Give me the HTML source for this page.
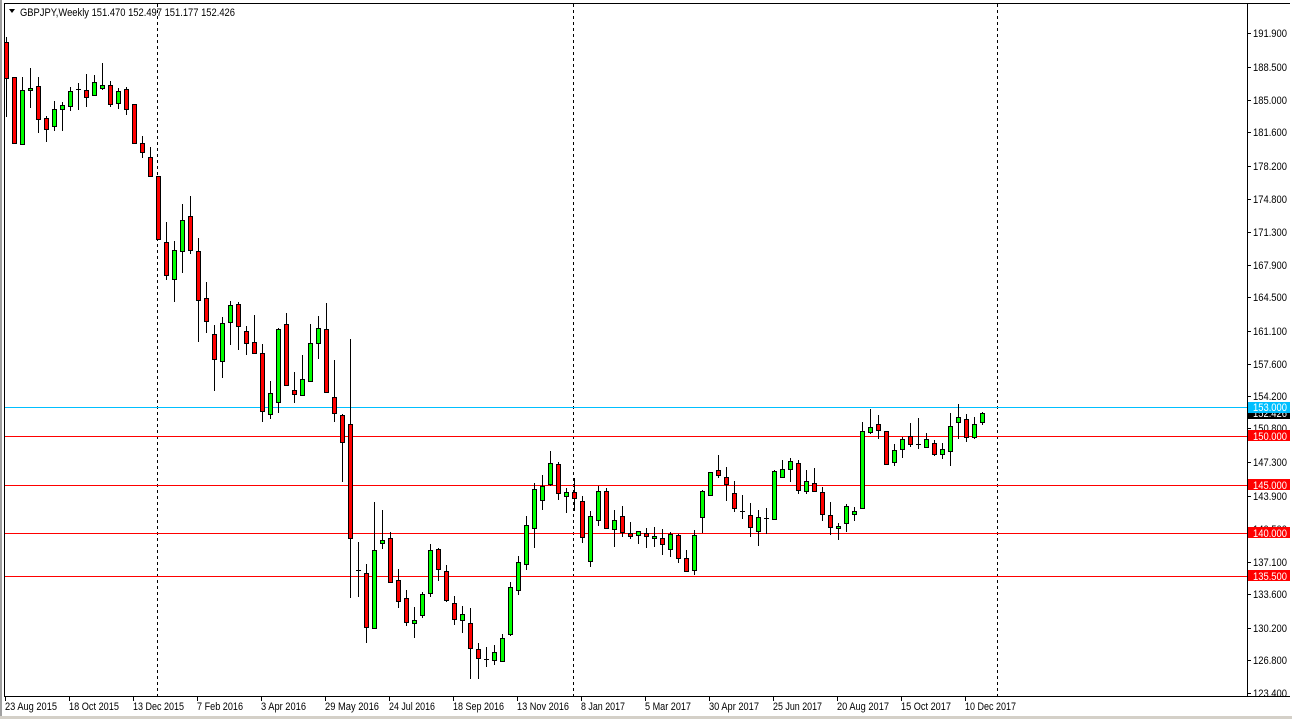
<!DOCTYPE html>
<html><head><meta charset="utf-8"><style>
html,body{margin:0;padding:0;background:#fff;width:1292px;height:719px;overflow:hidden}
svg{display:block}
text{font-family:"Liberation Sans",sans-serif;font-size:11px}
.r{fill:#ff0000;stroke:#000;stroke-width:1}
.g{fill:#00ff00;stroke:#000;stroke-width:1}
</style></head><body>
<svg width="1292" height="719" viewBox="0 0 1292 719" xmlns="http://www.w3.org/2000/svg">
<rect x="0" y="0" width="1292" height="719" fill="#fff"/>
<rect x="0" y="0" width="2" height="719" fill="#a0a0a0"/>
<rect x="0" y="716" width="1292" height="3" fill="#d4d0c8"/>
<rect x="4" y="3" width="1286" height="1" fill="#000"/>
<rect x="4" y="3" width="1" height="694" fill="#000"/>
<rect x="4" y="696" width="1286" height="1" fill="#000"/>
<rect x="1247" y="3" width="1" height="694" fill="#000"/>
<g stroke="#000" stroke-width="1" stroke-dasharray="3,3">
<line x1="157.5" y1="4" x2="157.5" y2="696"/>
<line x1="573.5" y1="4" x2="573.5" y2="696"/>
<line x1="997.5" y1="4" x2="997.5" y2="696"/>
</g>
<g>
<rect x="5" y="407" width="1242" height="1" fill="#00bfff"/>
<rect x="5" y="436" width="1242" height="1" fill="#ff0000"/>
<rect x="5" y="485" width="1242" height="1" fill="#ff0000"/>
<rect x="5" y="533" width="1242" height="1" fill="#ff0000"/>
<rect x="5" y="576" width="1242" height="1" fill="#ff0000"/>
</g>
<g fill="#000">
<rect x="6" y="37" width="1" height="80"/><rect x="14" y="77" width="1" height="67"/><rect x="22" y="77" width="1" height="67"/><rect x="30" y="68" width="1" height="40"/><rect x="38" y="77" width="1" height="56"/><rect x="46" y="116" width="1" height="26"/><rect x="54" y="101" width="1" height="30"/><rect x="62" y="102" width="1" height="29"/><rect x="70" y="87" width="1" height="24"/><rect x="78" y="83" width="1" height="27"/><rect x="86" y="74" width="1" height="33"/><rect x="94" y="75" width="1" height="21"/><rect x="102" y="63" width="1" height="27"/><rect x="110" y="81" width="1" height="26"/><rect x="118" y="88" width="1" height="21"/><rect x="126" y="87" width="1" height="28"/><rect x="134" y="104" width="1" height="39"/><rect x="142" y="136" width="1" height="22"/><rect x="150" y="147" width="1" height="29"/><rect x="158" y="176" width="1" height="64"/><rect x="166" y="222" width="1" height="58"/><rect x="174" y="241" width="1" height="61"/><rect x="182" y="204" width="1" height="69"/><rect x="190" y="196" width="1" height="58"/><rect x="198" y="238" width="1" height="104"/><rect x="206" y="282" width="1" height="51"/><rect x="214" y="325" width="1" height="66"/><rect x="222" y="317" width="1" height="61"/><rect x="230" y="301" width="1" height="44"/><rect x="238" y="302" width="1" height="48"/><rect x="246" y="326" width="1" height="29"/><rect x="254" y="315" width="1" height="38"/><rect x="262" y="344" width="1" height="78"/><rect x="270" y="381" width="1" height="38"/><rect x="278" y="328" width="1" height="85"/><rect x="286" y="313" width="1" height="73"/><rect x="294" y="372" width="1" height="31"/><rect x="302" y="355" width="1" height="40"/><rect x="310" y="324" width="1" height="58"/><rect x="318" y="316" width="1" height="43"/><rect x="326" y="303" width="1" height="89"/><rect x="334" y="360" width="1" height="62"/><rect x="342" y="414" width="1" height="68"/><rect x="350" y="339" width="1" height="259"/><rect x="358" y="542" width="1" height="55"/><rect x="366" y="564" width="1" height="79"/><rect x="374" y="502" width="1" height="126"/><rect x="382" y="510" width="1" height="39"/><rect x="390" y="532" width="1" height="50"/><rect x="398" y="569" width="1" height="39"/><rect x="406" y="590" width="1" height="36"/><rect x="414" y="607" width="1" height="31"/><rect x="422" y="592" width="1" height="26"/><rect x="430" y="544" width="1" height="53"/><rect x="438" y="548" width="1" height="33"/><rect x="446" y="565" width="1" height="37"/><rect x="454" y="596" width="1" height="29"/><rect x="462" y="606" width="1" height="27"/><rect x="470" y="608" width="1" height="71"/><rect x="478" y="643" width="1" height="36"/><rect x="486" y="647" width="1" height="20"/><rect x="494" y="645" width="1" height="20"/><rect x="502" y="634" width="1" height="28"/><rect x="510" y="582" width="1" height="54"/><rect x="518" y="556" width="1" height="39"/><rect x="526" y="516" width="1" height="54"/><rect x="534" y="483" width="1" height="65"/><rect x="542" y="475" width="1" height="35"/><rect x="550" y="451" width="1" height="35"/><rect x="558" y="462" width="1" height="38"/><rect x="566" y="488" width="1" height="25"/><rect x="574" y="478" width="1" height="33"/><rect x="582" y="496" width="1" height="47"/><rect x="590" y="511" width="1" height="56"/><rect x="598" y="486" width="1" height="40"/><rect x="606" y="488" width="1" height="41"/><rect x="614" y="510" width="1" height="37"/><rect x="622" y="506" width="1" height="31"/><rect x="630" y="522" width="1" height="17"/><rect x="638" y="531" width="1" height="13"/><rect x="646" y="528" width="1" height="20"/><rect x="654" y="527" width="1" height="20"/><rect x="662" y="529" width="1" height="26"/><rect x="670" y="532" width="1" height="25"/><rect x="678" y="534" width="1" height="29"/><rect x="686" y="550" width="1" height="22"/><rect x="694" y="530" width="1" height="45"/><rect x="702" y="490" width="1" height="43"/><rect x="710" y="472" width="1" height="24"/><rect x="718" y="455" width="1" height="23"/><rect x="726" y="467" width="1" height="34"/><rect x="734" y="481" width="1" height="31"/><rect x="742" y="495" width="1" height="24"/><rect x="750" y="503" width="1" height="34"/><rect x="758" y="510" width="1" height="36"/><rect x="766" y="508" width="1" height="26"/><rect x="774" y="470" width="1" height="49"/><rect x="782" y="460" width="1" height="18"/><rect x="790" y="458" width="1" height="24"/><rect x="798" y="460" width="1" height="34"/><rect x="806" y="470" width="1" height="24"/><rect x="814" y="468" width="1" height="24"/><rect x="822" y="487" width="1" height="34"/><rect x="830" y="502" width="1" height="33"/><rect x="838" y="523" width="1" height="17"/><rect x="846" y="504" width="1" height="28"/><rect x="854" y="507" width="1" height="14"/><rect x="862" y="422" width="1" height="87"/><rect x="870" y="409" width="1" height="25"/><rect x="878" y="415" width="1" height="24"/><rect x="886" y="431" width="1" height="34"/><rect x="894" y="444" width="1" height="22"/><rect x="902" y="437" width="1" height="21"/><rect x="910" y="423" width="1" height="24"/><rect x="918" y="418" width="1" height="31"/><rect x="926" y="433" width="1" height="15"/><rect x="934" y="440" width="1" height="16"/><rect x="942" y="443" width="1" height="16"/><rect x="950" y="413" width="1" height="53"/><rect x="958" y="404" width="1" height="35"/><rect x="966" y="414" width="1" height="28"/><rect x="974" y="417" width="1" height="22"/><rect x="982" y="412" width="1" height="13"/>
<rect x="76" y="89" width="5" height="1"/><rect x="356" y="570" width="5" height="1"/><rect x="484" y="659" width="5" height="1"/><rect x="740" y="511" width="5" height="1"/><rect x="764" y="518" width="5" height="1"/><rect x="916" y="444" width="5" height="1"/>
</g>
<g>
<rect class="r" x="4.5" y="42.5" width="4" height="36"/><rect class="r" x="12.5" y="77.5" width="4" height="66"/><rect class="g" x="20.5" y="90.5" width="4" height="54"/><rect class="g" x="28.5" y="88.5" width="4" height="2"/><rect class="r" x="36.5" y="86.5" width="4" height="33"/><rect class="r" x="44.5" y="118.5" width="4" height="11"/><rect class="g" x="52.5" y="109.5" width="4" height="17"/><rect class="g" x="60.5" y="105.5" width="4" height="4"/><rect class="g" x="68.5" y="91.5" width="4" height="15"/><rect class="r" x="84.5" y="90.5" width="4" height="7"/><rect class="g" x="92.5" y="82.5" width="4" height="13"/><rect class="g" x="100.5" y="85.5" width="4" height="3"/><rect class="r" x="108.5" y="85.5" width="4" height="19"/><rect class="g" x="116.5" y="91.5" width="4" height="12"/><rect class="r" x="124.5" y="89.5" width="4" height="20"/><rect class="r" x="132.5" y="104.5" width="4" height="39"/><rect class="r" x="140.5" y="143.5" width="4" height="9"/><rect class="r" x="148.5" y="157.5" width="4" height="19"/><rect class="r" x="156.5" y="176.5" width="4" height="63"/><rect class="r" x="164.5" y="242.5" width="4" height="33"/><rect class="g" x="172.5" y="250.5" width="4" height="29"/><rect class="g" x="180.5" y="220.5" width="4" height="31"/><rect class="r" x="188.5" y="216.5" width="4" height="34"/><rect class="r" x="196.5" y="251.5" width="4" height="49"/><rect class="r" x="204.5" y="298.5" width="4" height="23"/><rect class="r" x="212.5" y="334.5" width="4" height="25"/><rect class="g" x="220.5" y="323.5" width="4" height="38"/><rect class="g" x="228.5" y="305.5" width="4" height="17"/><rect class="r" x="236.5" y="304.5" width="4" height="22"/><rect class="r" x="244.5" y="331.5" width="4" height="12"/><rect class="r" x="252.5" y="342.5" width="4" height="11"/><rect class="r" x="260.5" y="353.5" width="4" height="58"/><rect class="g" x="268.5" y="393.5" width="4" height="21"/><rect class="g" x="276.5" y="329.5" width="4" height="73"/><rect class="r" x="284.5" y="324.5" width="4" height="61"/><rect class="r" x="292.5" y="390.5" width="4" height="4"/><rect class="g" x="300.5" y="379.5" width="4" height="16"/><rect class="g" x="308.5" y="343.5" width="4" height="38"/><rect class="g" x="316.5" y="328.5" width="4" height="15"/><rect class="r" x="324.5" y="329.5" width="4" height="63"/><rect class="r" x="332.5" y="397.5" width="4" height="16"/><rect class="r" x="340.5" y="415.5" width="4" height="27"/><rect class="r" x="348.5" y="424.5" width="4" height="114"/><rect class="r" x="364.5" y="573.5" width="4" height="54"/><rect class="g" x="372.5" y="550.5" width="4" height="78"/><rect class="g" x="380.5" y="540.5" width="4" height="3"/><rect class="r" x="388.5" y="538.5" width="4" height="44"/><rect class="r" x="396.5" y="580.5" width="4" height="21"/><rect class="r" x="404.5" y="598.5" width="4" height="24"/><rect class="g" x="412.5" y="620.5" width="4" height="3"/><rect class="g" x="420.5" y="594.5" width="4" height="21"/><rect class="g" x="428.5" y="550.5" width="4" height="43"/><rect class="r" x="436.5" y="549.5" width="4" height="20"/><rect class="r" x="444.5" y="571.5" width="4" height="29"/><rect class="r" x="452.5" y="603.5" width="4" height="16"/><rect class="g" x="460.5" y="614.5" width="4" height="6"/><rect class="r" x="468.5" y="623.5" width="4" height="25"/><rect class="r" x="476.5" y="649.5" width="4" height="9"/><rect class="g" x="492.5" y="652.5" width="4" height="8"/><rect class="g" x="500.5" y="638.5" width="4" height="23"/><rect class="g" x="508.5" y="587.5" width="4" height="47"/><rect class="g" x="516.5" y="562.5" width="4" height="28"/><rect class="g" x="524.5" y="525.5" width="4" height="39"/><rect class="g" x="532.5" y="489.5" width="4" height="39"/><rect class="g" x="540.5" y="486.5" width="4" height="14"/><rect class="g" x="548.5" y="463.5" width="4" height="21"/><rect class="r" x="556.5" y="464.5" width="4" height="29"/><rect class="g" x="564.5" y="492.5" width="4" height="4"/><rect class="r" x="572.5" y="492.5" width="4" height="6"/><rect class="r" x="580.5" y="501.5" width="4" height="36"/><rect class="g" x="588.5" y="516.5" width="4" height="45"/><rect class="g" x="596.5" y="491.5" width="4" height="29"/><rect class="r" x="604.5" y="491.5" width="4" height="37"/><rect class="g" x="612.5" y="520.5" width="4" height="9"/><rect class="r" x="620.5" y="516.5" width="4" height="16"/><rect class="r" x="628.5" y="533.5" width="4" height="3"/><rect class="g" x="636.5" y="531.5" width="4" height="4"/><rect class="r" x="644.5" y="533.5" width="4" height="3"/><rect class="g" x="652.5" y="536.5" width="4" height="2"/><rect class="r" x="660.5" y="538.5" width="4" height="6"/><rect class="g" x="668.5" y="534.5" width="4" height="15"/><rect class="r" x="676.5" y="535.5" width="4" height="23"/><rect class="r" x="684.5" y="558.5" width="4" height="13"/><rect class="g" x="692.5" y="535.5" width="4" height="35"/><rect class="g" x="700.5" y="491.5" width="4" height="26"/><rect class="g" x="708.5" y="472.5" width="4" height="23"/><rect class="r" x="716.5" y="470.5" width="4" height="5"/><rect class="r" x="724.5" y="477.5" width="4" height="7"/><rect class="r" x="732.5" y="493.5" width="4" height="15"/><rect class="r" x="748.5" y="515.5" width="4" height="12"/><rect class="g" x="756.5" y="517.5" width="4" height="14"/><rect class="g" x="772.5" y="471.5" width="4" height="48"/><rect class="g" x="780.5" y="469.5" width="4" height="8"/><rect class="g" x="788.5" y="461.5" width="4" height="8"/><rect class="r" x="796.5" y="463.5" width="4" height="27"/><rect class="g" x="804.5" y="481.5" width="4" height="10"/><rect class="r" x="812.5" y="483.5" width="4" height="8"/><rect class="r" x="820.5" y="492.5" width="4" height="22"/><rect class="r" x="828.5" y="515.5" width="4" height="12"/><rect class="g" x="836.5" y="526.5" width="4" height="2"/><rect class="g" x="844.5" y="506.5" width="4" height="17"/><rect class="g" x="852.5" y="511.5" width="4" height="3"/><rect class="g" x="860.5" y="431.5" width="4" height="77"/><rect class="g" x="868.5" y="427.5" width="4" height="5"/><rect class="r" x="876.5" y="424.5" width="4" height="6"/><rect class="r" x="884.5" y="431.5" width="4" height="33"/><rect class="g" x="892.5" y="450.5" width="4" height="12"/><rect class="g" x="900.5" y="439.5" width="4" height="10"/><rect class="r" x="908.5" y="436.5" width="4" height="8"/><rect class="g" x="924.5" y="439.5" width="4" height="8"/><rect class="r" x="932.5" y="443.5" width="4" height="11"/><rect class="g" x="940.5" y="449.5" width="4" height="5"/><rect class="g" x="948.5" y="426.5" width="4" height="25"/><rect class="g" x="956.5" y="417.5" width="4" height="5"/><rect class="r" x="964.5" y="419.5" width="4" height="18"/><rect class="g" x="972.5" y="424.5" width="4" height="13"/><rect class="g" x="980.5" y="413.5" width="4" height="9"/>
</g>
<path d="M9 9 L15 9 L12 13 Z" fill="#000"/>
<text x="20" y="16" fill="#000" textLength="215" lengthAdjust="spacingAndGlyphs">GBPJPY,Weekly  151.470 152.497 151.177 152.426</text>
<g fill="#000">
<rect x="1247" y="33" width="4" height="1"/><rect x="1247" y="67" width="4" height="1"/><rect x="1247" y="100" width="4" height="1"/><rect x="1247" y="132" width="4" height="1"/><rect x="1247" y="166" width="4" height="1"/><rect x="1247" y="199" width="4" height="1"/><rect x="1247" y="232" width="4" height="1"/><rect x="1247" y="265" width="4" height="1"/><rect x="1247" y="297" width="4" height="1"/><rect x="1247" y="331" width="4" height="1"/><rect x="1247" y="364" width="4" height="1"/><rect x="1247" y="396" width="4" height="1"/><rect x="1247" y="428" width="4" height="1"/><rect x="1247" y="462" width="4" height="1"/><rect x="1247" y="496" width="4" height="1"/><rect x="1247" y="529" width="4" height="1"/><rect x="1247" y="562" width="4" height="1"/><rect x="1247" y="594" width="4" height="1"/><rect x="1247" y="628" width="4" height="1"/><rect x="1247" y="660" width="4" height="1"/><rect x="1247" y="693" width="4" height="1"/>
</g>
<g fill="#000" textLength="34" lengthAdjust="spacingAndGlyphs">
<text x="1253" y="37" textLength="34" lengthAdjust="spacingAndGlyphs">191.900</text><text x="1253" y="71" textLength="34" lengthAdjust="spacingAndGlyphs">188.500</text><text x="1253" y="104" textLength="34" lengthAdjust="spacingAndGlyphs">185.000</text><text x="1253" y="136" textLength="34" lengthAdjust="spacingAndGlyphs">181.600</text><text x="1253" y="170" textLength="34" lengthAdjust="spacingAndGlyphs">178.200</text><text x="1253" y="203" textLength="34" lengthAdjust="spacingAndGlyphs">174.800</text><text x="1253" y="236" textLength="34" lengthAdjust="spacingAndGlyphs">171.300</text><text x="1253" y="269" textLength="34" lengthAdjust="spacingAndGlyphs">167.900</text><text x="1253" y="301" textLength="34" lengthAdjust="spacingAndGlyphs">164.500</text><text x="1253" y="335" textLength="34" lengthAdjust="spacingAndGlyphs">161.100</text><text x="1253" y="368" textLength="34" lengthAdjust="spacingAndGlyphs">157.600</text><text x="1253" y="400" textLength="34" lengthAdjust="spacingAndGlyphs">154.200</text><text x="1253" y="432" textLength="34" lengthAdjust="spacingAndGlyphs">150.800</text><text x="1253" y="466" textLength="34" lengthAdjust="spacingAndGlyphs">147.300</text><text x="1253" y="500" textLength="34" lengthAdjust="spacingAndGlyphs">143.900</text><text x="1253" y="533" textLength="34" lengthAdjust="spacingAndGlyphs">140.500</text><text x="1253" y="566" textLength="34" lengthAdjust="spacingAndGlyphs">137.100</text><text x="1253" y="598" textLength="34" lengthAdjust="spacingAndGlyphs">133.600</text><text x="1253" y="632" textLength="34" lengthAdjust="spacingAndGlyphs">130.200</text><text x="1253" y="664" textLength="34" lengthAdjust="spacingAndGlyphs">126.800</text><text x="1253" y="697" textLength="34" lengthAdjust="spacingAndGlyphs">123.400</text>
</g>
<rect x="1248" y="408" width="42" height="11" fill="#000"/>
<text x="1253" y="417" fill="#fff" textLength="34" lengthAdjust="spacingAndGlyphs">152.426</text>
<rect x="1248" y="402" width="42" height="11" fill="#00bfff"/>
<text x="1253" y="411" fill="#fff" textLength="34" lengthAdjust="spacingAndGlyphs">153.000</text>
<rect x="1248" y="430" width="42" height="11" fill="#ff0000"/>
<text x="1253" y="440" fill="#fff" textLength="34" lengthAdjust="spacingAndGlyphs">150.000</text>
<rect x="1248" y="479" width="42" height="11" fill="#ff0000"/>
<text x="1253" y="489" fill="#fff" textLength="34" lengthAdjust="spacingAndGlyphs">145.000</text>
<rect x="1248" y="527" width="42" height="11" fill="#ff0000"/>
<text x="1253" y="537" fill="#fff" textLength="34" lengthAdjust="spacingAndGlyphs">140.000</text>
<rect x="1248" y="570" width="42" height="11" fill="#ff0000"/>
<text x="1253" y="580" fill="#fff" textLength="34" lengthAdjust="spacingAndGlyphs">135.500</text>
<g fill="#000">
<rect x="5" y="697" width="1" height="4"/><rect x="69" y="697" width="1" height="4"/><rect x="133" y="697" width="1" height="4"/><rect x="197" y="697" width="1" height="4"/><rect x="261" y="697" width="1" height="4"/><rect x="325" y="697" width="1" height="4"/><rect x="389" y="697" width="1" height="4"/><rect x="453" y="697" width="1" height="4"/><rect x="517" y="697" width="1" height="4"/><rect x="581" y="697" width="1" height="4"/><rect x="645" y="697" width="1" height="4"/><rect x="709" y="697" width="1" height="4"/><rect x="773" y="697" width="1" height="4"/><rect x="837" y="697" width="1" height="4"/><rect x="901" y="697" width="1" height="4"/><rect x="965" y="697" width="1" height="4"/>
<text x="5" y="710" textLength="52" lengthAdjust="spacingAndGlyphs">23 Aug 2015</text><text x="69" y="710" textLength="50" lengthAdjust="spacingAndGlyphs">18 Oct 2015</text><text x="133" y="710" textLength="51" lengthAdjust="spacingAndGlyphs">13 Dec 2015</text><text x="197" y="710" textLength="46" lengthAdjust="spacingAndGlyphs">7 Feb 2016</text><text x="261" y="710" textLength="45" lengthAdjust="spacingAndGlyphs">3 Apr 2016</text><text x="325" y="710" textLength="54" lengthAdjust="spacingAndGlyphs">29 May 2016</text><text x="389" y="710" textLength="46" lengthAdjust="spacingAndGlyphs">24 Jul 2016</text><text x="453" y="710" textLength="51" lengthAdjust="spacingAndGlyphs">18 Sep 2016</text><text x="517" y="710" textLength="52" lengthAdjust="spacingAndGlyphs">13 Nov 2016</text><text x="581" y="710" textLength="44" lengthAdjust="spacingAndGlyphs">8 Jan 2017</text><text x="645" y="710" textLength="46" lengthAdjust="spacingAndGlyphs">5 Mar 2017</text><text x="709" y="710" textLength="50" lengthAdjust="spacingAndGlyphs">30 Apr 2017</text><text x="773" y="710" textLength="49" lengthAdjust="spacingAndGlyphs">25 Jun 2017</text><text x="837" y="710" textLength="52" lengthAdjust="spacingAndGlyphs">20 Aug 2017</text><text x="901" y="710" textLength="50" lengthAdjust="spacingAndGlyphs">15 Oct 2017</text><text x="965" y="710" textLength="51" lengthAdjust="spacingAndGlyphs">10 Dec 2017</text>
</g>
</svg>
</body></html>
